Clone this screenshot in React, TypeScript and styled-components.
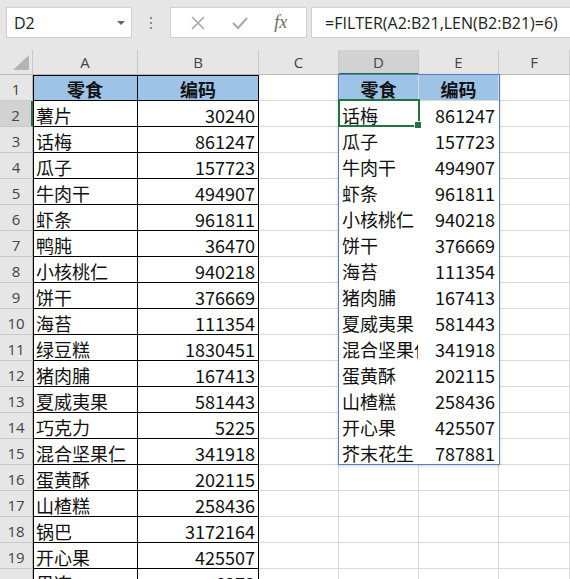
import React from "react";
import styled, { createGlobalStyle } from "styled-components";

const GlobalStyle = createGlobalStyle`
  body {
    margin: 0;
    padding: 0;
    overflow: hidden;
    background: #ffffff;
  }
`;

const UI_FONT = `"Open Sans", "Liberation Sans", "Noto Sans CJK SC", sans-serif`;
const CELL_FONT = `"Noto Sans CJK SC", "Noto Sans", sans-serif`;

const Page = styled.div`
  width: 570px;
  height: 579px;
  display: flex;
  flex-direction: column;
  overflow: hidden;
`;

const Toolbar = styled.div`
  height: 50px;
  flex: none;
  box-sizing: border-box;
  background: #e6e6e6;
  display: flex;
  align-items: flex-start;
  padding: 7px 0 0 6px;
`;

const NameBox = styled.div`
  width: 126px;
  height: 31px;
  box-sizing: border-box;
  background: #fff;
  border: 1px solid #d0d0d0;
  display: flex;
  align-items: center;
  justify-content: space-between;
  padding: 0 6px 0 7px;
  font-family: ${UI_FONT};
  font-size: 16px;
  color: #222;
`;

const DropArrow = styled.span`
  width: 0;
  height: 0;
  border-left: 4px solid transparent;
  border-right: 4px solid transparent;
  border-top: 4px solid #666;
`;

const Grip = styled.div`
  width: 38px;
  height: 31px;
  display: flex;
  flex-direction: column;
  align-items: center;
  justify-content: center;
  gap: 3px;
`;

const GripDot = styled.span`
  width: 2px;
  height: 2px;
  background: #8a8a8a;
`;

const FxBox = styled.div`
  width: 137px;
  height: 31px;
  box-sizing: border-box;
  background: #fff;
  border: 1px solid #d0d0d0;
  display: flex;
  align-items: center;
  justify-content: space-around;
  padding: 0 6px;
`;

const FxLabel = styled.span`
  font-family: "Liberation Serif", serif;
  font-style: italic;
  font-size: 18px;
  color: #6a6a6a;
`;

const FormulaInput = styled.div`
  flex: 1;
  margin-left: 4px;
  height: 31px;
  box-sizing: border-box;
  background: #fff;
  border: 1px solid #d0d0d0;
  border-right: none;
  display: flex;
  align-items: center;
  padding-left: 13px;
  font-family: ${UI_FONT};
  font-size: 16px;
  color: #222;
  white-space: nowrap;
  overflow: hidden;
`;

const Sheet = styled.div`
  position: relative;
  display: grid;
  grid-template-columns: 33px 105px 121px 80px 80px 80px 1fr;
  grid-template-rows: 25px repeat(20, 26px);
  flex: none;
`;

const Corner = styled.div`
  background: #e6e6e6;
  border-right: 1px solid #c8c8c8;
  border-bottom: 1px solid #b8b8b8;
  box-sizing: border-box;
  display: flex;
  align-items: flex-end;
  justify-content: flex-end;
  padding: 0 3px 4px 0;
`;

const ColHead = styled.div<{ $sel?: boolean }>`
  box-sizing: border-box;
  background: ${(p) => (p.$sel ? "#d2d2d2" : "#e6e6e6")};
  border-right: 1px solid #c8c8c8;
  border-bottom: ${(p) => (p.$sel ? "2px solid #217346" : "1px solid #b8b8b8")};
  display: flex;
  align-items: center;
  justify-content: center;
  font-family: ${UI_FONT};
  font-size: 15px;
  color: #444;
`;

const RowHead = styled.div<{ $sel?: boolean }>`
  box-sizing: border-box;
  background: ${(p) => (p.$sel ? "#d2d2d2" : "#e6e6e6")};
  border-right: ${(p) => (p.$sel ? "2px solid #217346" : "1px solid #b8b8b8")};
  border-bottom: 1px solid #c8c8c8;
  display: flex;
  align-items: center;
  justify-content: center;
  font-family: ${UI_FONT};
  font-size: 15px;
  color: #444;
  padding-top: 2px;
`;

type Edge = "grid" | "black" | "none";

const edgeColor = (e?: Edge) => (e === "black" ? "#000" : e === "none" ? "#fff" : "#d9d9d9");

const Cell = styled.div<{
  $right?: boolean;
  $fill?: string;
  $bold?: boolean;
  $edge?: Edge;
  $left?: boolean;
  $top?: boolean;
}>`
  box-sizing: border-box;
  background: ${(p) => p.$fill || "#fff"};
  border-right: 1px solid ${(p) => edgeColor(p.$edge)};
  border-bottom: 1px solid ${(p) => edgeColor(p.$edge)};
  box-shadow: ${(p) =>
    [p.$left ? "inset 1px 0 0 #000" : "", p.$top ? "inset 0 1px 0 #000" : ""]
      .filter(Boolean)
      .join(", ") || "none"};
  display: flex;
  align-items: center;
  justify-content: ${(p) => (p.$bold ? "center" : p.$right ? "flex-end" : "flex-start")};
  padding: 2px 3px 0 3px;
  font-family: ${CELL_FONT};
  font-size: 18px;
  font-weight: ${(p) => (p.$bold ? 700 : 400)};
  color: #111;
  white-space: nowrap;
  overflow: hidden;
`;

const SpillFrame = styled.div`
  position: absolute;
  left: 338px;
  top: 24px;
  width: 162px;
  height: 391px;
  box-sizing: border-box;
  border: 1px solid #5b7bbf;
  box-shadow: 0 1px 3px rgba(0, 0, 0, 0.18);
  pointer-events: none;
`;

const Selection = styled.div`
  position: absolute;
  left: 338px;
  top: 49px;
  width: 82px;
  height: 28px;
  box-sizing: border-box;
  border: 2px solid #217346;
  pointer-events: none;
`;

const Handle = styled.span`
  position: absolute;
  right: -4px;
  bottom: -4px;
  width: 6px;
  height: 6px;
  background: #217346;
  border: 1px solid #fff;
`;

const left: [string, string][] = [
  ["薯片", "30240"],
  ["话梅", "861247"],
  ["瓜子", "157723"],
  ["牛肉干", "494907"],
  ["虾条", "961811"],
  ["鸭肫", "36470"],
  ["小核桃仁", "940218"],
  ["饼干", "376669"],
  ["海苔", "111354"],
  ["绿豆糕", "1830451"],
  ["猪肉脯", "167413"],
  ["夏威夷果", "581443"],
  ["巧克力", "5225"],
  ["混合坚果仁", "341918"],
  ["蛋黄酥", "202115"],
  ["山楂糕", "258436"],
  ["锅巴", "3172164"],
  ["开心果", "425507"],
  ["果冻", "6272"],
];

const filtered: [string, string][] = [
  ["话梅", "861247"],
  ["瓜子", "157723"],
  ["牛肉干", "494907"],
  ["虾条", "961811"],
  ["小核桃仁", "940218"],
  ["饼干", "376669"],
  ["海苔", "111354"],
  ["猪肉脯", "167413"],
  ["夏威夷果", "581443"],
  ["混合坚果仁", "341918"],
  ["蛋黄酥", "202115"],
  ["山楂糕", "258436"],
  ["开心果", "425507"],
  ["芥末花生", "787881"],
];

const HEAD_FILL = "#9dc3e6";
const cols = ["A", "B", "C", "D", "E", "F"];

const App: React.FC = () => {
  const rows: React.ReactNode[] = [];
  for (let r = 1; r <= 20; r++) {
    rows.push(
      <RowHead key={`h${r}`} $sel={r === 2}>
        {r}
      </RowHead>
    );
    if (r === 1) {
      rows.push(
        <Cell key={`a${r}`} $fill={HEAD_FILL} $bold $edge="black" $left $top>
          零食
        </Cell>,
        <Cell key={`b${r}`} $fill={HEAD_FILL} $bold $edge="black" $top>
          编码
        </Cell>,
        <Cell key={`c${r}`} />,
        <Cell key={`d${r}`} $fill={HEAD_FILL} $bold>
          零食
        </Cell>,
        <Cell key={`e${r}`} $fill={HEAD_FILL} $bold>
          编码
        </Cell>,
        <Cell key={`f${r}`} />
      );
    } else {
      const a = left[r - 2];
      const f = filtered[r - 2];
      rows.push(
        <Cell key={`a${r}`} $edge="black" $left>
          {a ? a[0] : ""}
        </Cell>,
        <Cell key={`b${r}`} $edge="black" $right>
          {a ? a[1] : ""}
        </Cell>,
        <Cell key={`c${r}`} />,
        <Cell key={`d${r}`} $edge={f ? "none" : "grid"}>
          {f ? f[0] : ""}
        </Cell>,
        <Cell key={`e${r}`} $edge={f ? "none" : "grid"} $right>
          {f ? f[1] : ""}
        </Cell>,
        <Cell key={`f${r}`} />
      );
    }
  }

  return (
    <>
      <GlobalStyle />
      <Page>
        <Toolbar>
          <NameBox>
            D2
            <DropArrow />
          </NameBox>
          <Grip>
            <GripDot />
            <GripDot />
            <GripDot />
          </Grip>
          <FxBox>
            <svg width="16" height="16" viewBox="0 0 16 16">
              <path d="M2 2 L14 14 M14 2 L2 14" stroke="#a8a8a8" strokeWidth="1.6" fill="none" />
            </svg>
            <svg width="18" height="16" viewBox="0 0 18 16">
              <path d="M2 8 L7 13 L16 3" stroke="#a8a8a8" strokeWidth="2" fill="none" />
            </svg>
            <FxLabel>fx</FxLabel>
          </FxBox>
          <FormulaInput>=FILTER(A2:B21,LEN(B2:B21)=6)</FormulaInput>
        </Toolbar>
        <Sheet>
          <Corner>
            <svg width="16" height="15" viewBox="0 0 16 15">
              <path d="M16 0 L16 15 L0 15 Z" fill="#b4b4b4" />
            </svg>
          </Corner>
          {cols.map((c) => (
            <ColHead key={c} $sel={c === "D"}>
              {c}
            </ColHead>
          ))}
          {rows}
          <SpillFrame />
          <Selection>
            <Handle />
          </Selection>
        </Sheet>
      </Page>
    </>
  );
};

export default App;
